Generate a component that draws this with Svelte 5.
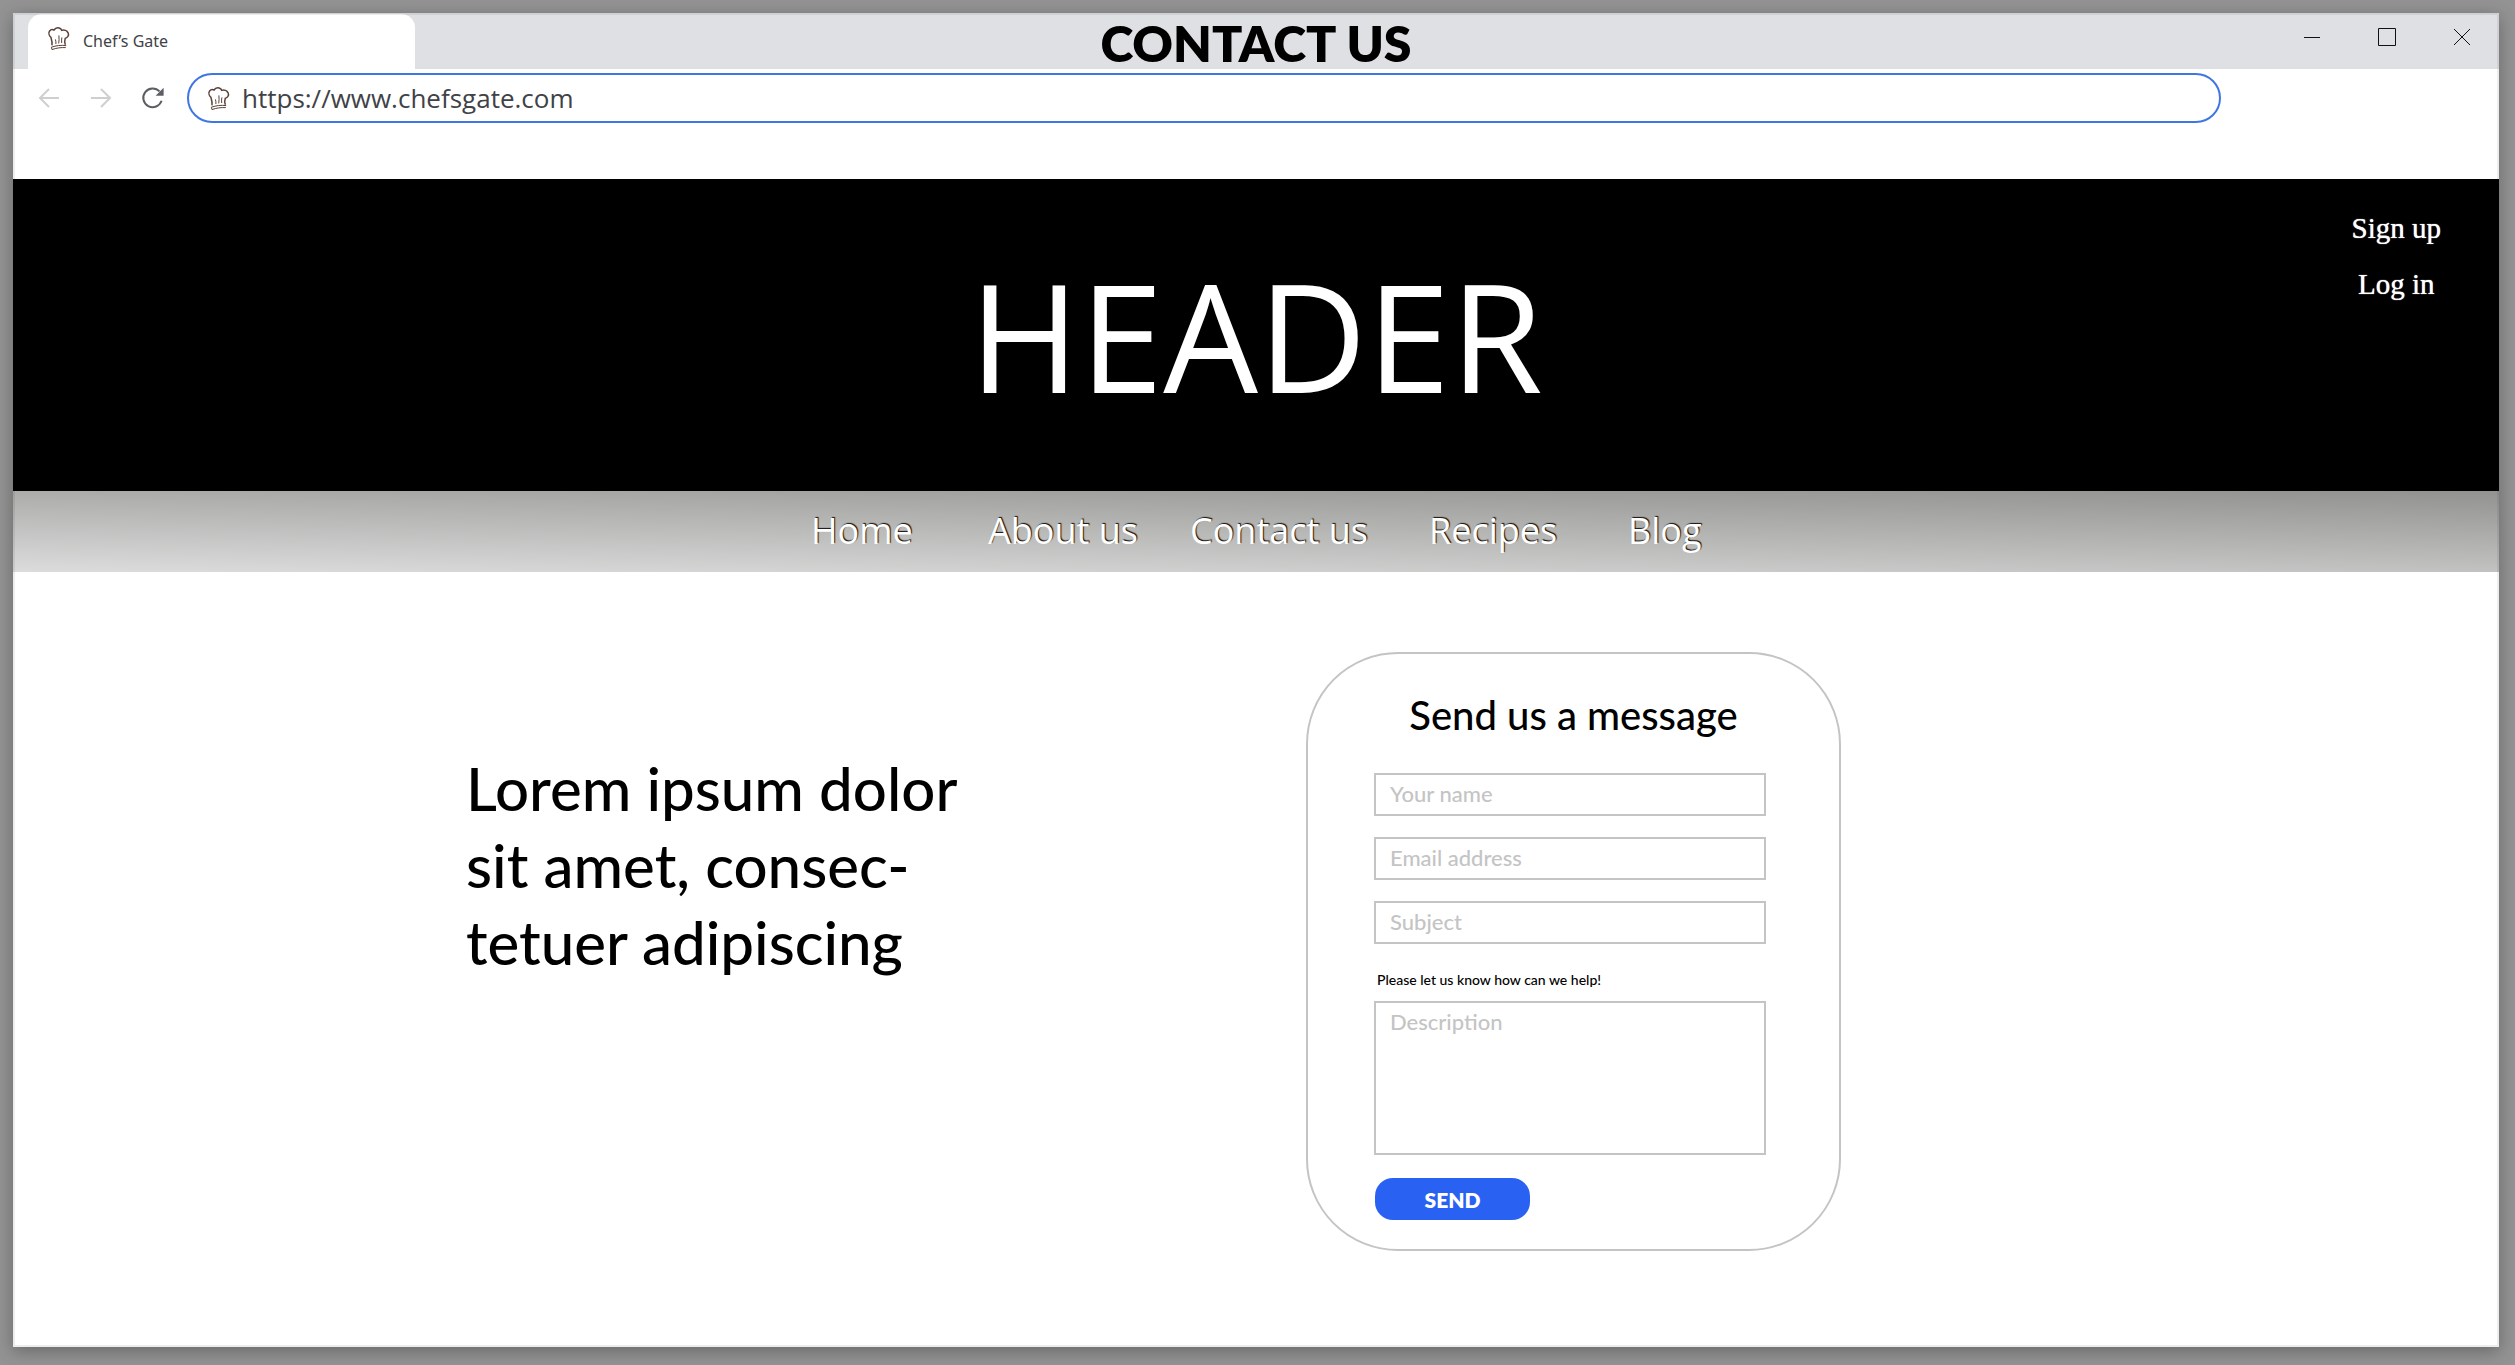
<script>
  const links = ['Home', 'About us', 'Contact us', 'Recipes', 'Blog'];
  const fields = [
    { id: 'name', label: 'Your name', type: 'text' },
    { id: 'email', label: 'Email address', type: 'email' },
    { id: 'subject', label: 'Subject', type: 'text' }
  ];
  let url = $state('https://www.chefsgate.com');
</script>

{#snippet hat()}
  <svg class="hat" viewBox="0 0 22 23" aria-hidden="true">
    <path d="M4 18.4C4.4 15.6 3.6 12.6 2.9 10.3C1 8.6 .3 5.8 1.6 4C2.7 2.6 4.6 2.4 6 3C7.2 1.2 9.4.5 11.2 1C12.7 1.4 13.4 2.4 13.7 3.4C16.2 2.6 19 3.6 20.1 5.8C21.2 8.3 19.8 10.6 17.2 11.4C16.4 13.6 16.6 15.6 17.4 17.8" />
    <path class="thin" d="M3.4 20.2C8.2 18.6 12.8 17.9 18.2 18.6M4 22.6C8.4 20.9 13 20.4 17.8 20.6M3.4 20.2L4 22.6" />
    <path class="thin" d="M7.4 12.4C7.9 13.8 8 15.4 7.9 17M10.9 8.4C11.2 11.4 11.1 14 10.7 16.4M13.9 10.4C13.5 12 13.5 14 13.7 16" />
  </svg>
{/snippet}

<div class="desktop">
  <div class="window">
    <div class="tabbar">
      <div class="tab">{@render hat()}<span>Chef’s Gate</span></div>
      <h1>CONTACT US</h1>
      <div class="controls">
        <button aria-label="Minimize"><svg viewBox="0 0 18 18"><path d="M1 9.5H17" /></svg></button>
        <button aria-label="Maximize"><svg viewBox="0 0 18 18"><path d="M.5 .5H17.5V17.5H.5Z" /></svg></button>
        <button aria-label="Close"><svg viewBox="0 0 18 18"><path d="M1 1L17 17M17 1L1 17" /></svg></button>
      </div>
    </div>

    <div class="toolbar">
      <button class="faded" aria-label="Back"><svg viewBox="0 0 22 22"><path d="M21 11H2M11 2L2 11L11 20" /></svg></button>
      <button class="faded" aria-label="Forward"><svg viewBox="0 0 22 22"><path d="M1 11H20M11 2L20 11L11 20" /></svg></button>
      <button aria-label="Reload"><svg viewBox="0 0 22 22"><path d="M17.6 4.4A9.4 9.4 0 1 0 19.6 13.8" /><path class="solid" d="M21.6 .8V8.8H13.6Z" /></svg></button>
      <label class="address">{@render hat()}<input type="text" aria-label="Address" bind:value={url} /></label>
    </div>

    <header>
      <div class="banner">HEADER</div>
      <div class="account">
        <a href="#signup">Sign up</a>
        <a href="#login">Log in</a>
      </div>
    </header>

    <nav>
      {#each links as link}
        <a href="#{link.toLowerCase().replace(' ', '-')}">{link}</a>
      {/each}
    </nav>

    <main>
      <p class="intro">Lorem ipsum dolor<br />sit amet, consec-<br />tetuer adipiscing</p>
      <form onsubmit={(e) => e.preventDefault()}>
        <h2>Send us a message</h2>
        {#each fields as field}
          <input class="field" id={field.id} type={field.type} placeholder={field.label} aria-label={field.label} />
        {/each}
        <label class="help" for="description">Please let us know how can we help!</label>
        <textarea class="field" id="description" placeholder="Description"></textarea>
        <button class="send">SEND</button>
      </form>
    </main>
  </div>
</div>

<style>
  :global(body) { margin: 0; }
  .desktop {
    box-sizing: border-box;
    min-height: 100vh;
    padding: 13px 16px 18px 13px;
    display: flex;
    background: #939393;
    font-family: Lato, sans-serif;
    font-weight: 500;
    color: #000;
  }
  .window {
    position: relative;
    flex: 1;
    min-width: 0;
    display: flex;
    flex-direction: column;
    background: #fff;
    box-shadow: 0 4px 16px rgba(0, 0, 0, 0.3);
  }
  .window::after {
    content: '';
    position: absolute;
    inset: 0;
    border: 2px solid rgba(0, 0, 0, 0.07);
    pointer-events: none;
  }
  button {
    border: 0;
    padding: 0;
    background: none;
    font: inherit;
    cursor: pointer;
  }
  svg { display: block; fill: none; overflow: visible; }
  .hat { width: 22px; height: 23px; flex: none; stroke: #5b4038; stroke-width: 1.5; }
  .thin { stroke-width: 1; }

  .tabbar {
    display: grid;
    grid-template-columns: 1fr auto 1fr;
    height: 56px;
    background: #dfe0e4;
  }
  .tab {
    box-sizing: border-box;
    display: flex;
    gap: 13px;
    width: 387px;
    margin: 1px 0 0 15px;
    padding: 13px 20px;
    border-radius: 14px 14px 0 0;
    background: #fff;
    font: 16px/28px "Noto Sans", sans-serif;
    color: #3f4247;
  }
  h1 { margin: 0; font-size: 50px; line-height: 60px; font-weight: 800; }
  .controls { display: flex; justify-content: flex-end; gap: 57px; padding: 15px 28px 0 0; }
  .controls svg { width: 18px; height: 18px; stroke: #111; stroke-width: 1; }
  .controls button { height: 18px; }

  .toolbar {
    display: flex;
    align-items: center;
    gap: 30px;
    height: 50px;
    padding: 4px 278px 56px 25px;
  }
  .toolbar svg { width: 22px; height: 22px; stroke: #5b5f64; stroke-width: 2; }
  .toolbar .faded svg { stroke: #cfcfcf; }
  .toolbar .solid { fill: #5b5f64; stroke: none; }
  .toolbar .hat { width: 22px; height: 23px; stroke: #5b4038; stroke-width: 1.5; }
  .toolbar .thin { stroke-width: 1; }
  .address {
    box-sizing: border-box;
    flex: 1;
    display: flex;
    align-items: center;
    gap: 12px;
    height: 50px;
    margin-left: -7px;
    padding: 0 20px 0 19px;
    border: 2px solid #3f76e4;
    border-radius: 25px;
  }
  .address input {
    flex: 1;
    border: 0;
    padding: 0;
    outline: 0;
    background: none;
    font: 26px/36px "Open Sans", sans-serif;
    color: #3f4247;
  }

  header {
    position: relative;
    display: flex;
    justify-content: center;
    align-items: center;
    height: 312px;
    background: #000;
    color: #fff;
  }
  .banner { font: 150px/200px "Open Sans", sans-serif; }
  .account {
    position: absolute;
    top: 21px;
    right: 58px;
    display: grid;
    justify-items: center;
    font: 29px/56px "Liberation Serif", serif;
    text-shadow: 0 0 1px #fff;
  }
  a { color: #fff; text-decoration: none; }

  nav {
    display: grid;
    grid-template-columns: 177px 202px 239px 199px 73px;
    justify-content: center;
    background: linear-gradient(181deg, #929290, #dcdcdc);
    font: 36px/79px "Open Sans", sans-serif;
    padding-bottom: 2px;
    white-space: nowrap;
    text-shadow: 1px -1px 1px #111;
  }

  main {
    display: grid;
    grid-template-columns: 453fr 840fr 535px 658fr;
    align-items: start;
    padding: 80px 0;
  }
  .intro { grid-column: 2; margin: 98px 0 0; font-size: 60px; line-height: 77px; }
  form {
    box-sizing: border-box;
    display: flex;
    flex-direction: column;
    align-items: flex-start;
    padding: 33px 66px 29px;
    border: 2px solid #c4c4c4;
    border-radius: 92px;
  }
  h2 { align-self: center; margin: 0 0 29px; font-size: 40px; line-height: 57px; font-weight: 500; white-space: nowrap; }
  .field {
    box-sizing: border-box;
    width: calc(100% - 7px);
    height: 43px;
    margin: 0 0 21px;
    padding: 0 14px 2px;
    border: 2px solid #c4c4c4;
    border-radius: 0;
    outline: 0;
    background: #fff;
    font: 500 22px/34px Lato, sans-serif;
  }
  .field::placeholder { color: #c4c4c4; opacity: 1; }
  .help { margin-left: 3px; font-size: 14px; line-height: 30px; }
  textarea.field { height: 154px; margin: 6px 0 23px; padding: 2px 14px; resize: none; }
  .send {
    width: 155px;
    height: 42px;
    margin-left: 1px;
    border-radius: 18px;
    background: #2962f3;
    color: #fff;
    font-size: 21px;
    font-weight: 800;
  }
</style>
